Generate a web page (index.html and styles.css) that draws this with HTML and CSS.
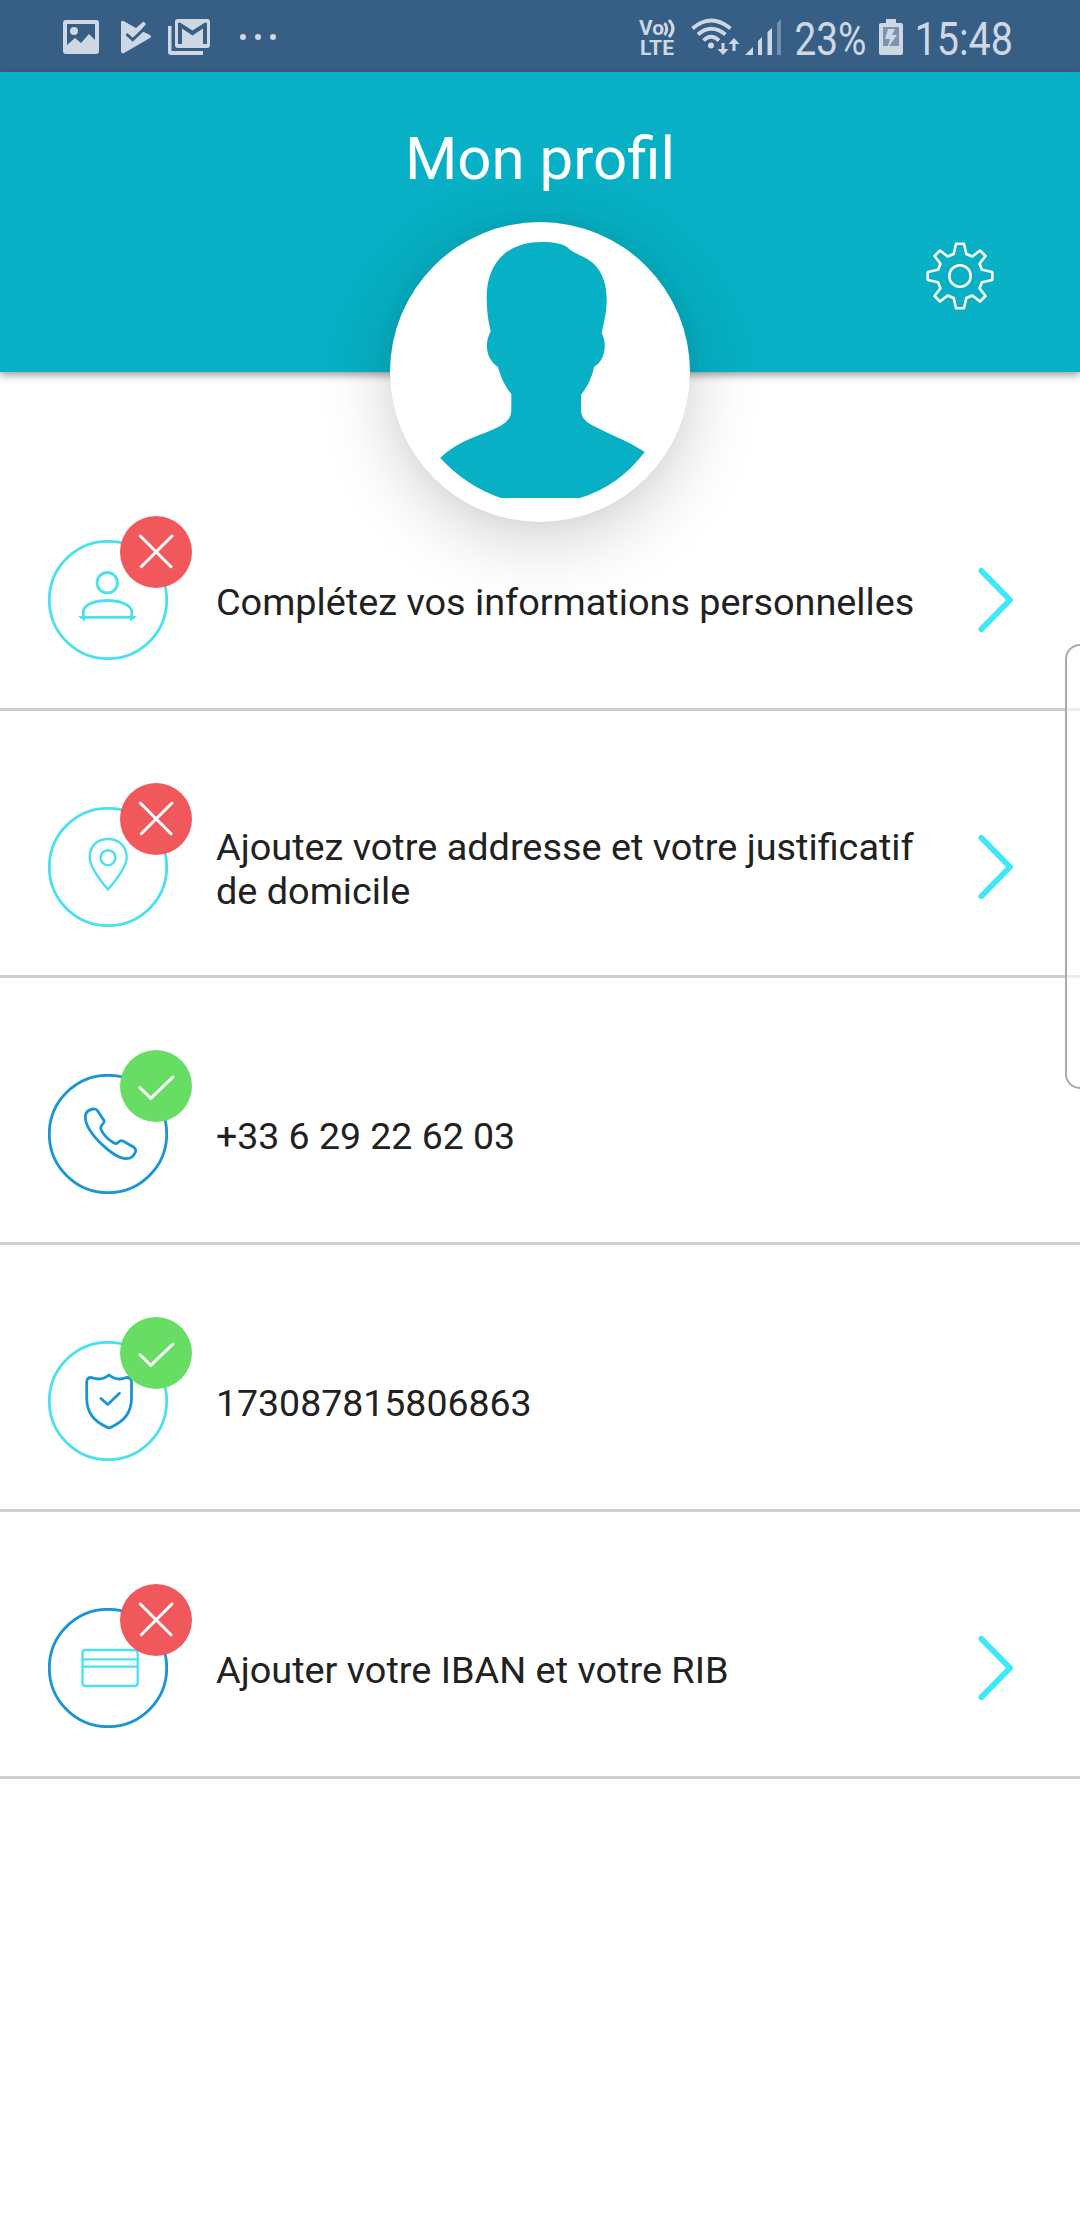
FILE: index.html
```html
<!DOCTYPE html>
<html lang="fr">
<head>
    <meta charset="UTF-8">
    <meta name="viewport" content="width=device-width, initial-scale=1.0">
    <title>Mon profil</title>
    <link rel="stylesheet" href="styles.css">
</head>
<body>

    <div class="status-bar">
        <div class="status-left">
            <svg width="36" height="34" viewBox="0 0 36 34">
                <path fill-rule="evenodd" d="M3 0h30q3 0 3 3v28q0 3-3 3H3q-3 0-3-3V3q0-3 3-3zM4 4v21l8-7 6 5 8-9 6 6V4z"/>
                <circle cx="11" cy="11" r="4"/>
            </svg>
            <svg class="play" width="30" height="34" viewBox="0 0 30 34">
                <path d="M0 2.500Q0 0 2.500 1L15 8 22.500 1.500 25 4 19.500 10.500 29 15q2 1.500 0 3L3 33q-3 1-3-1.500z"/>
                <path class="check" d="M5.500 14L11.700 19.800 22.500 9.500"/>
            </svg>
            <svg class="gmail" width="42" height="36" viewBox="0 0 42 36">
                <path fill-rule="evenodd" d="M10 0h29q3 0 3 3v23q0 3-3 3H10q-3 0-3-3V3q0-3 3-3zM10 4v21h4V9.500l10.500 7L35 9.500V25h4V4l-2-.500-12.500 8L12 3.500z"/>
                <path d="M0 7h3.500v25H35v4H3q-3 0-3-3z"/>
            </svg>
            <svg class="dots" width="36" height="8" viewBox="0 0 36 8">
                <circle cx="3" cy="4" r="3"/><circle cx="18" cy="4" r="3"/><circle cx="33" cy="4" r="3"/>
            </svg>
        </div>
        <div class="status-right">
            <svg class="volte" width="37" height="36" viewBox="0 0 37 36">
                <text x="0" y="16" textLength="25" lengthAdjust="spacingAndGlyphs">Vo</text>
                <path class="line" d="M25.500 4q4.500 6 0 12M30 1q8 8.500 0 17"/>
                <text x="1" y="36" textLength="34" lengthAdjust="spacingAndGlyphs">LTE</text>
            </svg>
            <svg class="wifi" width="48" height="36" viewBox="0 0 48 36">
                <path class="line wave" d="M1.500 9.500Q20-6.500 39.500 9.500M7 15.500Q20 4 34.500 15.500M12.500 21.500Q20 14 28 21.500"/>
                <circle cx="20" cy="26.500" r="3"/>
                <path d="M30.500 24h3v6h4L32 36l-5.500-6h4zM41.500 32h3v-7h4L43 19l-5.500 6h4z"/>
            </svg>
            <svg class="signal" width="36" height="36" viewBox="0 0 36 36">
                <path d="M0 36L8 28V36zM13 36V22l4-4V36zM22.500 36V13l4.500-4V36z"/>
                <path opacity=".4" d="M32 36V4l4-4V36z"/>
            </svg>
            <svg class="percent" width="70" height="36" viewBox="0 0 70 36">
                <text x="-1.500" y="36" textLength="72" lengthAdjust="spacingAndGlyphs">23%</text>
            </svg>
            <svg class="battery" width="24" height="36" viewBox="0 0 24 36">
                <path fill-rule="evenodd" d="M7 0h10v4h5q2 0 2 2v28q0 2-2 2H2q-2 0-2-2V6q0-2 2-2h5zM4 8v19h16V8z"/>
                <path opacity=".45" d="M4 8h16v19H4z"/>
                <path d="M9 10h7l-3 6h5L8 30l3-10H6z"/>
            </svg>
            <svg class="clock" width="96" height="36" viewBox="0 0 96 36">
                <text x="-2.500" y="36" textLength="98.500" lengthAdjust="spacingAndGlyphs">15:48</text>
            </svg>
        </div>
    </div>

    <header class="header">
        <h1>Mon profil</h1>
        <svg class="gear" width="68" height="68" viewBox="-34 -34 68 68">
            <path d="M-4-32.300H4L6.300-22 12.300-19.500 20-25.500 25.500-20 19.500-12.300 22-6.300 32.300-4V4L22 6.300 19.500 12.300 25.500 20 20 25.500 12.300 19.500 6.300 22 4 32.300H-4L-6.300 22-12.300 19.500-20 25.500-25.500 20-19.500 12.300-22 6.300-32.300 4V-4L-22-6.300-19.500-12.300-25.500-20-20-25.500-12.300-19.500-6.300-22z"/>
            <circle r="10.700"/>
        </svg>
        <div class="avatar">
            <svg width="300" height="300" viewBox="0 0 300 300">
                <path d="M152 20C164 20 173 22 177 25C187 34 194 33 204 42C214 52 217 66 216.700 80C216.500 91 214 100 211.700 111C217 121 216 138 204 145C202 156 197 165 191 173V188Q191 195 197 200C212 210 236 217 254.700 230Q229 264 190 276H111Q76 264 50.300 236C71 215 101 212 116 200Q121 196 121.300 188V172C115 164 111 156 108 145C96 137 94 122 100.700 109C98 98 97 90 96.700 77C96 42 116 20 152 20z"/>
            </svg>
        </div>
    </header>

    <ul class="list">
        <li class="item">
            <div class="icon">
                <svg class="cyan" width="120" height="120" viewBox="0 0 120 120">
                    <circle cx="60" cy="60" r="58.700"/>
                    <circle cx="59.300" cy="42.700" r="10.200"/>
                    <path d="M35.300 77V71.500C36 64 48 60.500 59.300 60.500S83 64 83.700 71.500V77M33 77.300H86"/>
                    <path class="tip" d="M30 76h7v5.500zM89 76h-7v5.500z"/>
                </svg>
                <svg class="badge red" width="72" height="72" viewBox="0 0 72 72">
                    <path d="M20.300 20L51 50.700M52 20L21.300 50.700"/>
                </svg>
            </div>
            <p>Complétez vos informations personnelles</p>
            <svg class="chevron" width="40" height="64" viewBox="0 0 40 64"><path d="M5.300 2.700L34 32 5.300 61.300"/></svg>
        </li>
        <li class="item">
            <div class="icon">
                <svg class="cyan" width="120" height="120" viewBox="0 0 120 120">
                    <circle cx="60" cy="60" r="58.700"/>
                    <path class="thin" d="M60 82.500Q41.700 61 41.700 50.500C41.700 39 49.500 32 60 32S78.700 39 78.700 50.500Q78.700 61 60 82.500z"/>
                    <circle class="thin" cx="60" cy="50.700" r="7.500"/>
                </svg>
                <svg class="badge red" width="72" height="72" viewBox="0 0 72 72">
                    <path d="M20.300 20L51 50.700M52 20L21.300 50.700"/>
                </svg>
            </div>
            <p>Ajoutez votre addresse et votre justificatif de domicile</p>
            <svg class="chevron" width="40" height="64" viewBox="0 0 40 64"><path d="M5.300 2.700L34 32 5.300 61.300"/></svg>
        </li>
        <li class="item">
            <div class="icon">
                <svg class="blue" width="120" height="120" viewBox="0 0 120 120">
                    <circle cx="60" cy="60" r="58.700"/>
                    <path d="M37.300 43Q37 36.500 45 35Q48 34.500 49.700 37L56 46.500Q56.500 48 55.500 49L53.500 51.500Q52.300 53 53 55.500Q57 64 66 69Q68 70 69.500 69L71.500 67.300Q73 66.300 75 67L85.500 73Q88.500 75.500 87.500 78Q84.500 85 78 84.700C66 84.500 37.500 59 37.300 43z"/>
                </svg>
                <svg class="badge green" width="72" height="72" viewBox="0 0 72 72">
                    <path d="M19.800 37.500L30.700 48.300 53 27"/>
                </svg>
            </div>
            <p class="number">+33 6 29 22 62 03</p>
        </li>
        <li class="item">
            <div class="icon">
                <svg class="cyan" width="120" height="120" viewBox="0 0 120 120">
                    <circle cx="60" cy="60" r="58.700"/>
                    <path class="shield" d="M61 34Q53 40.500 43.500 36.500Q38.700 36.500 38.700 41V57C38.700 72 46 80 58.500 86Q61 87.500 63.500 86C76 80 83.500 72 83.500 57V41Q83.500 36.500 78.500 36.500Q69 40.500 61 34zM53 57.500L59.700 63.500 71.500 52.300"/>
                </svg>
                <svg class="badge green" width="72" height="72" viewBox="0 0 72 72">
                    <path d="M19.800 37.500L30.700 48.300 53 27"/>
                </svg>
            </div>
            <p class="number">173087815806863</p>
        </li>
        <li class="item">
            <div class="icon">
                <svg class="blue" width="120" height="120" viewBox="0 0 120 120">
                    <circle cx="60" cy="60" r="58.700"/>
                    <path class="card" d="M37.500 42H86.700Q89.700 42 89.700 45V75Q89.700 78 86.700 78H37.500Q34.500 78 34.500 75V45Q34.500 42 37.500 42zM34.500 51.300H89.700M34.500 58.700H89.700"/>
                </svg>
                <svg class="badge red" width="72" height="72" viewBox="0 0 72 72">
                    <path d="M20.300 20L51 50.700M52 20L21.300 50.700"/>
                </svg>
            </div>
            <p>Ajouter votre IBAN et votre RIB</p>
            <svg class="chevron" width="40" height="64" viewBox="0 0 40 64"><path d="M5.300 2.700L34 32 5.300 61.300"/></svg>
        </li>
    </ul>

    <!-- edge panel handle -->
    <div class="edge-panel"></div>

</body>
</html>
```
FILE: styles.css
```css
* {
    box-sizing: border-box;
}
body {
    font-family: Roboto, sans-serif;
    position: relative;
    min-height: 100vh;
    margin: 0;
    background: #fff;
    color: #212121;
    overflow-x: hidden;
}
svg {
    display: block;
    flex: none;
}

/* status bar */
.status-bar {
    display: flex;
    justify-content: space-between;
    height: 72px;
    padding: 1px 67px 0 63px;
    background: #375e84;
    fill: #cdd8e4;
}
.status-left, .status-right {
    display: flex;
    align-items: center;
}
.play {
    margin-left: 22px;
}
.check {
    fill: none;
    stroke: #375e84;
    stroke-width: 3;
}
.gmail {
    margin-left: 17px;
}
.dots {
    margin-left: 30px;
}
.status-right svg {
    overflow: visible;
}
.status-right text {
    font-size: 45.500px;
}
.status-right .volte text {
    font-size: 21px;
    font-weight: 700;
}
.line {
    fill: none;
    stroke: #cdd8e4;
    stroke-width: 3;
}
.wave {
    stroke-width: 3.800;
}
.wifi {
    margin-left: 15px;
}
.signal {
    margin-left: 6px;
}
.percent {
    margin-left: 15px;
}
.battery {
    margin-left: 13px;
}
.clock {
    margin-left: 14px;
}

/* header */
.header {
    position: relative;
    height: 300px;
    background: #07b0c4;
    box-shadow: 0 3px 8px rgba(0, 0, 0, 0.4);
}
h1 {
    margin: 0;
    padding-top: 52px;
    color: #fff;
    font-size: 60px;
    font-weight: 400;
    line-height: 70px;
    text-align: center;
}
.gear {
    position: absolute;
    top: 170px;
    right: 86px;
    fill: none;
    stroke: #fff;
    stroke-width: 2.600;
    stroke-linejoin: round;
}
.avatar {
    position: absolute;
    top: 150px;
    left: 390px;
    border-radius: 50%;
    background: #fff;
    fill: #07b0c4;
    box-shadow: 0 18px 72px rgba(0, 0, 0, 0.18), 0 0 24px rgba(0, 0, 0, 0.04);
}

/* profile list */
.list {
    list-style: none;
    margin: 0;
    padding: 72px 0 0;
}
.item {
    display: flex;
    align-items: center;
    height: 267px;
    padding: 48px 64px 0 48px;
    border-bottom: 3px solid #d0d0d0;
}
.item p {
    flex: 1;
    margin: 4px 44px 0 48px;
    font-size: 37.850px;
    line-height: 44px;
}
.item .number {
    font-size: 37.450px;
}
.icon {
    position: relative;
    fill: none;
    stroke-width: 2.800;
    stroke-linejoin: round;
    stroke-linecap: round;
}
.cyan {
    stroke: #4ae0f2;
}
.blue {
    stroke: #1795d4;
}
.thin {
    stroke-width: 2.400;
}
.tip {
    fill: #4ae0f2;
    stroke: none;
}
.shield {
    stroke: #1795d4;
}
.card {
    stroke: #4ae0f2;
    stroke-width: 2.300;
}
.badge {
    position: absolute;
    top: -24px;
    left: 72px;
    border-radius: 50%;
    stroke: #fff;
    stroke-width: 3;
}
.red {
    background: #f1585b;
}
.green {
    background: #67de63;
}
.chevron {
    fill: none;
    stroke: #3ee8fa;
    stroke-width: 5.800;
    stroke-linecap: round;
    stroke-linejoin: round;
}

.edge-panel {
    position: absolute;
    top: 644px;
    right: 0;
    width: 15px;
    height: 445px;
    border: 2px solid #aaa;
    border-right: none;
    border-radius: 20px 0 0 20px;
    background: rgba(255, 255, 255, 0.6);
}
```
